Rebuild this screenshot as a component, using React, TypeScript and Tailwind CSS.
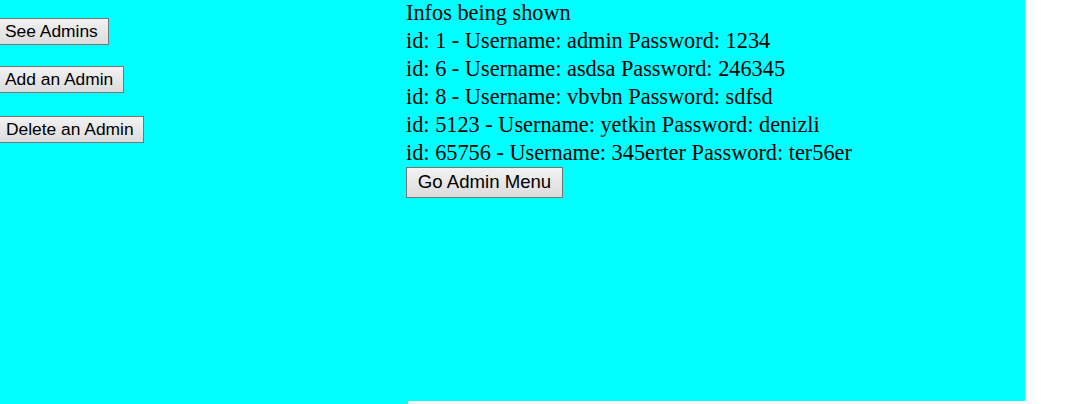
const admins = [
  { id: 1, username: 'admin', password: '1234' },
  { id: 6, username: 'asdsa', password: '246345' },
  { id: 8, username: 'vbvbn', password: 'sdfsd' },
  { id: 5123, username: 'yetkin', password: 'denizli' },
  { id: 65756, username: '345erter', password: 'ter56er' },
];

const btn =
  'block h-[27px] border-y border-r border-[#767676] bg-gradient-to-b from-[#f2f2f2] to-[#dcdcdc] pl-[5px] text-left text-[17.4px] leading-none text-black whitespace-nowrap';

export default function App() {
  return (
    <div className="flex w-[1086px] h-[404px] bg-white font-['Liberation_Sans',Arial,sans-serif]">
      {/* Left menu */}
      <div className="w-[408px] h-[404px] bg-[#00ffff] pt-[18px] flex flex-col">
        <button className={`${btn} w-[109px]`}>See Admins</button>
        <button className={`${btn} w-[124px] mt-[21px]`}>Add an Admin</button>
        <button className={`${btn} w-[144px] mt-[23px] pl-[6px]`}>Delete an Admin</button>
      </div>

      {/* Info panel */}
      <div className="-ml-[2px] w-[619px] h-[401px] bg-[#00ffff]">
        <div className="font-['Liberation_Serif','Times_New_Roman',serif] text-[22.3px] leading-[28px] text-black -mt-px">
          <div>Infos being shown</div>
          {admins.map((a) => (
            <div key={a.id}>
              id: {a.id} - Username: {a.username} Password: {a.password}
            </div>
          ))}
        </div>
        <button className="w-[157px] h-[31px] border border-[#767676] bg-gradient-to-b from-[#f2f2f2] to-[#dcdcdc] text-[18.6px] leading-none text-black">
          Go Admin Menu
        </button>
      </div>
    </div>
  );
}
